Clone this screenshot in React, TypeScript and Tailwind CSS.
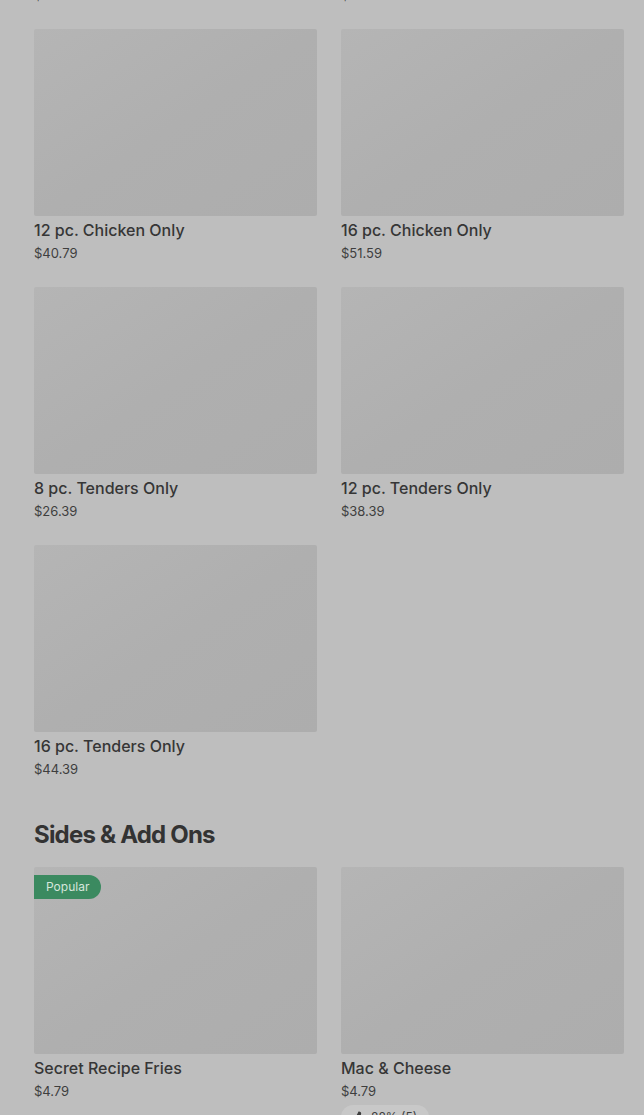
import { ThumbsUp } from 'lucide-react';

type Item = {
  name: string;
  price: string;
  popular?: boolean;
  rating?: string;
};

const chickenItems: Item[] = [
  { name: '8 pc. Chicken Only', price: '$28.79' },
  { name: '10 pc. Chicken Only', price: '$34.79' },
  { name: '12 pc. Chicken Only', price: '$40.79' },
  { name: '16 pc. Chicken Only', price: '$51.59' },
  { name: '8 pc. Tenders Only', price: '$26.39' },
  { name: '12 pc. Tenders Only', price: '$38.39' },
  { name: '16 pc. Tenders Only', price: '$44.39' },
];

const sideItems: Item[] = [
  { name: 'Secret Recipe Fries', price: '$4.79', popular: true },
  { name: 'Mac & Cheese', price: '$4.79', rating: '88% (5)' },
];

function ItemCard({ item }: { item: Item }) {
  return (
    <div className="flex flex-col">
      {/* image placeholder */}
      <div className="relative h-[187px] rounded-[2px] bg-gradient-to-br from-[#b5b5b5] via-[#afafaf] to-[#adadad]">
        {item.popular && (
          <span className="absolute left-0 top-2 h-6 pl-3 pr-3 rounded-r-full bg-[#3b8a60] text-[#d6e6dc] text-[12px] leading-6">
            Popular
          </span>
        )}
      </div>
      <div className="mt-1 text-[16px] leading-5 font-medium text-[#363636]">{item.name}</div>
      <div className="mt-[3px] text-[13px] leading-5 text-[#3e3e3e]">{item.price}</div>
      {item.rating && (
        <div className="mt-[4px] self-start flex items-center gap-1.5 h-6 px-3 rounded-full bg-[#c8c8c8] text-[12px] text-[#3e3e3e]">
          <ThumbsUp size={12} strokeWidth={2.5} fill="#3e3e3e" />
          {item.rating}
        </div>
      )}
    </div>
  );
}

export default function App() {
  return (
    <div
      className="w-[644px] h-[1115px] overflow-hidden bg-[#bebebe]"
      style={{ fontFamily: 'Inter, "Noto Sans", sans-serif' }}
    >
      <div className="pl-[34px] pr-[20px] -mt-[229px]">
        <div className="grid grid-cols-2 gap-x-6 gap-y-6">
          {chickenItems.map((item) => (
            <ItemCard key={item.name} item={item} />
          ))}
        </div>

        <h2 className="mt-10 mb-4 text-[24px] leading-8 font-bold tracking-[-0.8px] text-[#333333]">
          Sides &amp; Add Ons
        </h2>

        <div className="grid grid-cols-2 gap-x-6 gap-y-6">
          {sideItems.map((item) => (
            <ItemCard key={item.name} item={item} />
          ))}
        </div>
      </div>
    </div>
  );
}
